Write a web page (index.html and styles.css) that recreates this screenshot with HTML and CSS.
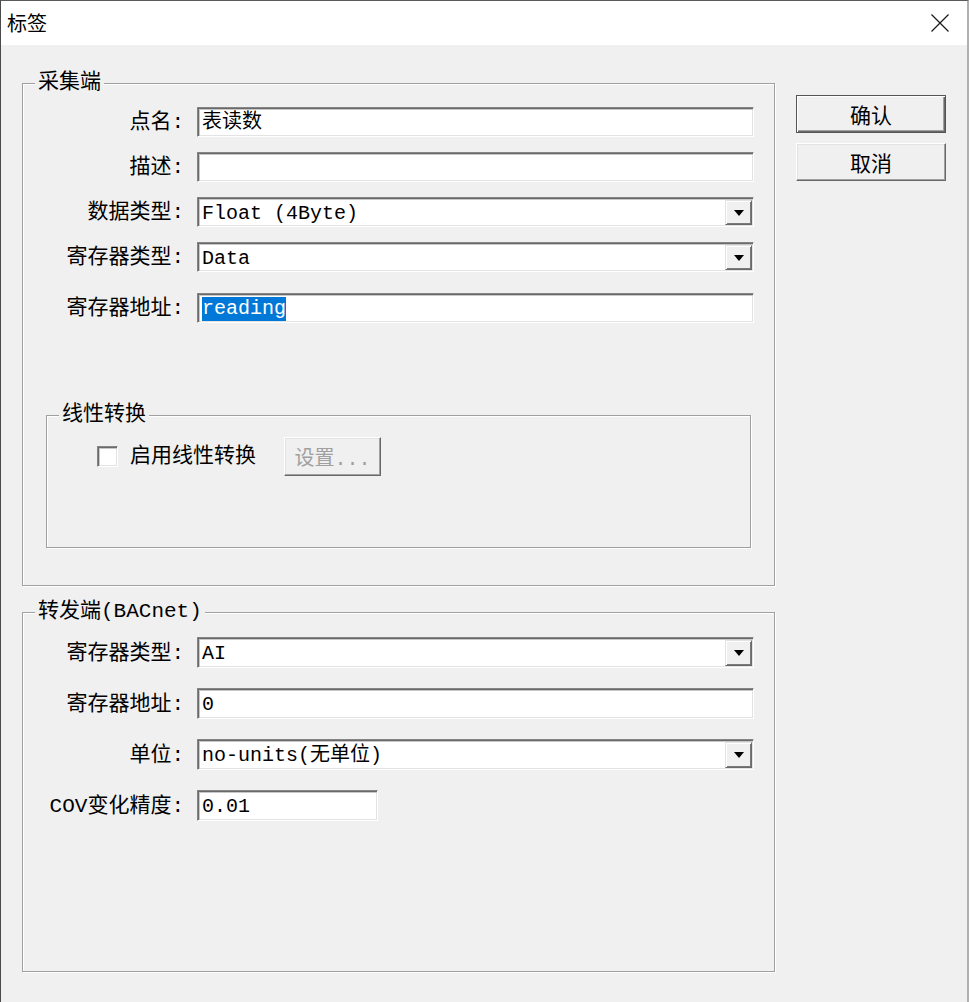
FILE: index.html
```html
<!DOCTYPE html>
<html>
<head>
    <title>标签</title>
    <link rel="stylesheet" href="styles.css">
</head>
    <body>
        <div class="window">
            <div class="titlebar">
                <span class="title">标签</span>
                <svg class="close" width="18" height="18" viewBox="0 0 18 18">
                    <path d="M0.5 0.5L17.5 17.5M17.5 0.5L0.5 17.5" stroke="#1a1a1a" stroke-width="1.2" fill="none"/>
                </svg>
            </div>

            <div class="dialog">
                <div class="main">
                    <fieldset class="group group-collect">
                        <legend>采集端</legend>
                        <div class="fields">
                            <div class="field">
                                <label>点名:</label>
                                <div class="edit">表读数</div>
                            </div>
                            <div class="field">
                                <label>描述:</label>
                                <div class="edit"></div>
                            </div>
                            <div class="field">
                                <label>数据类型:</label>
                                <div class="combo">
                                    <span class="combo-text">Float (4Byte)</span>
                                    <span class="combo-btn"><span class="arrow"></span></span>
                                </div>
                            </div>
                            <div class="field">
                                <label>寄存器类型:</label>
                                <div class="combo">
                                    <span class="combo-text">Data</span>
                                    <span class="combo-btn"><span class="arrow"></span></span>
                                </div>
                            </div>
                            <div class="field field-addr">
                                <label>寄存器地址:</label>
                                <div class="edit"><span class="sel">reading</span></div>
                            </div>
                        </div>

                        <fieldset class="group group-linear">
                            <legend>线性转换</legend>
                            <div class="linear-row">
                                <span class="check"></span>
                                <span class="check-label">启用线性转换</span>
                                <button class="btn btn-small" disabled>设置...</button>
                            </div>
                        </fieldset>
                    </fieldset>

                    <fieldset class="group group-bacnet">
                        <legend>转发端(BACnet)</legend>
                        <div class="fields">
                            <div class="field">
                                <label>寄存器类型:</label>
                                <div class="combo">
                                    <span class="combo-text">AI</span>
                                    <span class="combo-btn"><span class="arrow"></span></span>
                                </div>
                            </div>
                            <div class="field">
                                <label>寄存器地址:</label>
                                <div class="edit">0</div>
                            </div>
                            <div class="field">
                                <label>单位:</label>
                                <div class="combo">
                                    <span class="combo-text">no-units(无单位)</span>
                                    <span class="combo-btn"><span class="arrow"></span></span>
                                </div>
                            </div>
                            <div class="field">
                                <label>COV变化精度:</label>
                                <div class="edit edit-short">0.01</div>
                            </div>
                        </div>
                    </fieldset>
                </div>

                <div class="actions">
                    <button class="btn btn-default">确认</button>
                    <button class="btn">取消</button>
                </div>
            </div>
        </div>
    </body>
</html>
```

FILE: styles.css
```css
body {
    margin: 0;
    background: #f0f0f0;
    color: #000;
    font-family: "Liberation Mono", "Noto Sans CJK SC", monospace;
    font-size: 20px;
    line-height: 24px;
}
.window {
    width: 969px;
    height: 1002px;
    box-sizing: border-box;
    border-top: 1px solid #5a5a5a;
    border-left: 1px solid #4a4a4a;
    border-right: 2px solid #b0b0b0;
    background: #f0f0f0;
    overflow: hidden;
}
.titlebar {
    height: 44px;
    background: #fff;
    display: flex;
    align-items: center;
    justify-content: space-between;
    padding: 0 18px 0 6px;
}
.title {
    font-family: "Noto Sans CJK SC", sans-serif;
    font-size: 20px;
}
.dialog {
    display: flex;
    gap: 21px;
    padding: 27px 0 0 21px;
}
.main {
    width: 753px;
}
.actions {
    display: flex;
    flex-direction: column;
    gap: 10px;
    margin-top: 23px;
}

/* group boxes */
.group {
    margin: 0;
    padding: 0;
    min-width: 0;
    border: 1px solid #a0a0a0;
    box-shadow: inset 1px 1px 0 #fff, 1px 1px 0 #fff;
}
.group legend {
    margin-left: 12px;
    padding: 0 3px;
    font-size: 21px;
    line-height: 22px;
    background: #f0f0f0;
}
.group-collect {
    padding: 13px 0 37px;
}
.group-linear {
    margin: 81px 23px 0;
    padding: 11px 0 71px;
}
.group-bacnet {
    margin-top: 15px;
    padding: 14px 0 150px;
}

/* rows */
.fields {
    display: flex;
    flex-direction: column;
    gap: 15px;
}
.group-bacnet .fields {
    gap: 20px;
}
.field {
    display: flex;
    align-items: center;
    height: 30px;
}
.group-bacnet .field {
    height: 31px;
}
.field-addr {
    margin-top: 6px;
}
.field label {
    width: 161px;
    margin-right: 13px;
    padding-top: 2px;
    text-align: right;
    font-size: 21px;
}

/* sunken edit and combo boxes */
.edit,
.combo,
.check {
    box-sizing: border-box;
    background: #fff;
    border: 1px solid;
    border-color: #858585 #fff #fff #858585;
    box-shadow: inset 1px 1px 0 #6a6a6a, inset 2px 2px 0 #c8c8c8, inset -1px -1px 0 #e3e3e3;
}
.edit {
    width: 557px;
    height: 100%;
    display: flex;
    align-items: center;
    padding: 2px 4px 0;
}
.edit-short {
    width: 181px;
}
.sel {
    background: #0078d7;
    color: #fff;
    line-height: 24px;
}
.combo {
    width: 557px;
    height: 100%;
    display: flex;
    padding: 2px 1px 1px 2px;
}
.combo-text {
    flex: 1;
    display: flex;
    align-items: center;
    padding: 2px 0 0 2px;
}
.combo-btn {
    width: 27px;
    box-sizing: border-box;
    display: flex;
    align-items: center;
    justify-content: center;
    background: #f0f0f0;
    border: 1px solid;
    border-color: #e3e3e3 #696969 #696969 #e3e3e3;
    box-shadow: inset 1px 1px 0 #fff, inset -1px -1px 0 #7a7a7a;
}
.arrow {
    width: 0;
    height: 0;
    border-left: 5px solid transparent;
    border-right: 5px solid transparent;
    border-top: 6px solid #000;
}

/* linear conversion */
.linear-row {
    display: flex;
    align-items: center;
    padding-left: 50px;
}
.check {
    width: 21px;
    height: 21px;
    margin-right: 12px;
}
.check-label {
    font-size: 21px;
}

/* push buttons */
.btn {
    width: 150px;
    height: 38px;
    box-sizing: border-box;
    padding: 0;
    font-family: "Liberation Mono", "Noto Sans CJK SC", monospace;
    font-size: 21px;
    color: #000;
    background: #f0f0f0;
    border: 1px solid;
    border-color: #fff #696969 #696969 #fff;
    box-shadow: inset -1px -1px 0 #a0a0a0, inset 1px 1px 0 #e3e3e3;
}
.btn-default {
    border-color: #555;
    box-shadow: inset 1px 1px 0 #fff, inset -1px -1px 0 #696969, inset -2px -2px 0 #a0a0a0;
}
.btn-small {
    width: 97px;
    height: 39px;
    margin-left: 28px;
    font-size: 20px;
}
.btn:disabled {
    color: #a0a0a0;
}
```
